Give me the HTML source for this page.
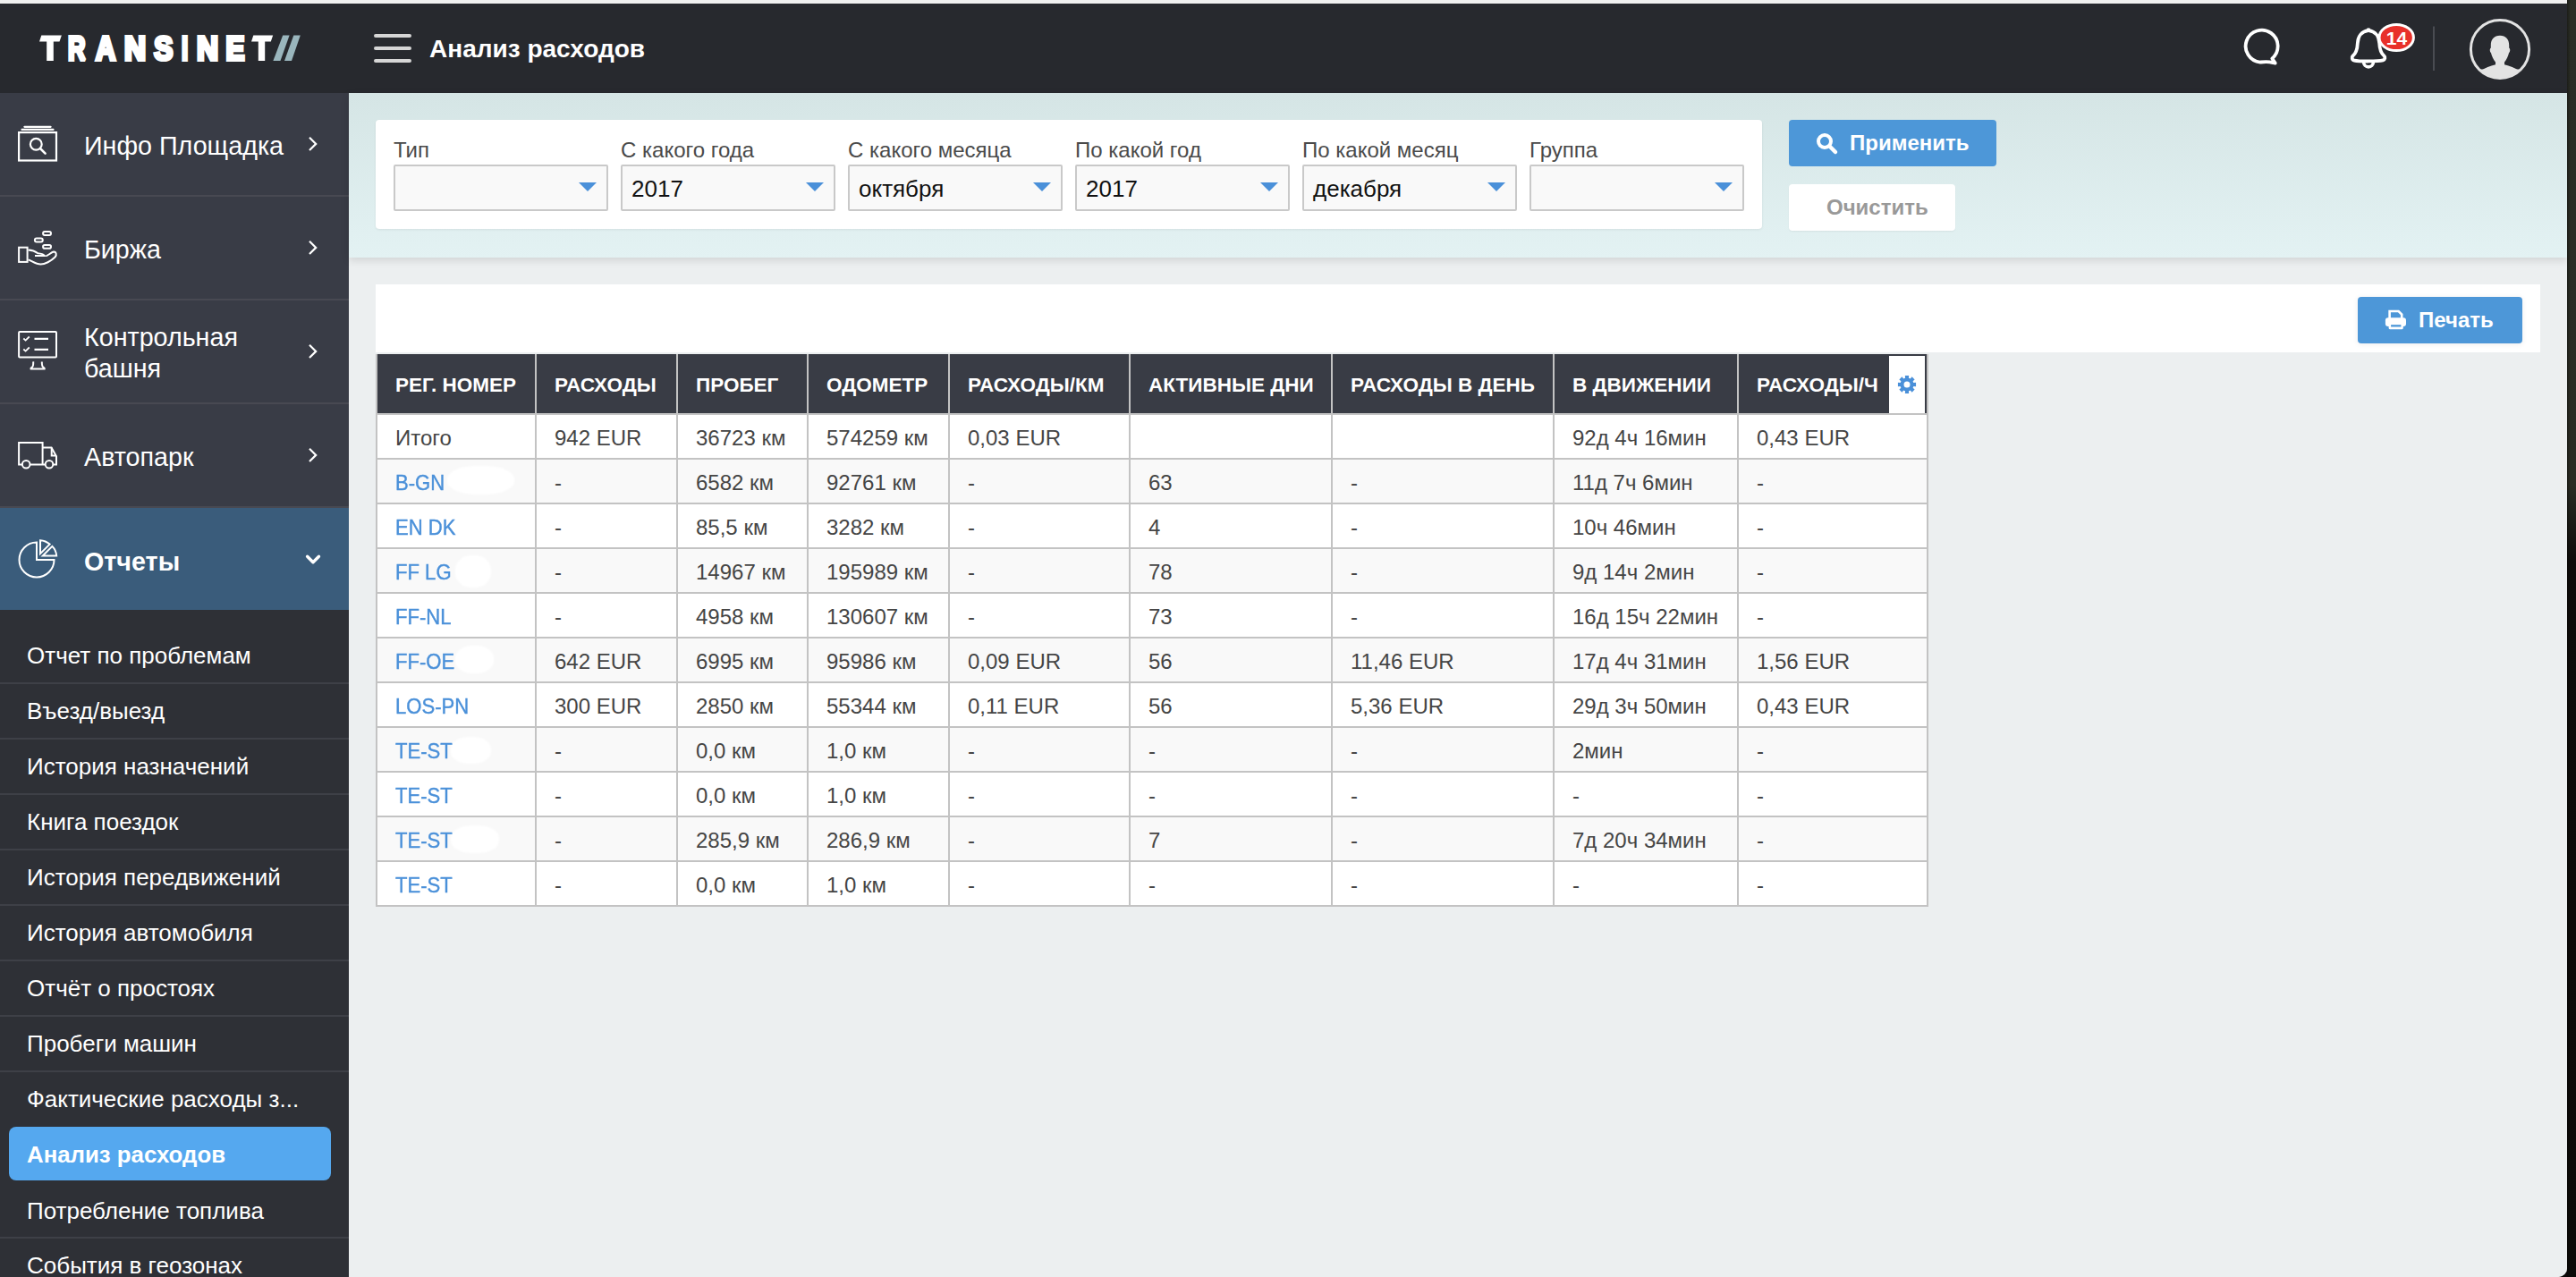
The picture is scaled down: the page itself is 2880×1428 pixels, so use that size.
<!DOCTYPE html>
<html><head><meta charset="utf-8">
<style>
*{box-sizing:border-box;margin:0;padding:0}
html,body{width:2880px;height:1428px;overflow:hidden}
body{position:relative;background:#0c0908;font-family:"Liberation Sans",sans-serif;}
.abs{position:absolute}
#strip{left:2870px;top:0;width:10px;height:1428px;background:linear-gradient(90deg,rgba(0,0,0,0.35),rgba(0,0,0,0) 40%),linear-gradient(#2b2e26,#2a2c24 38%,#0e0c0a 44%,#0c0a08)}
#win{left:0;top:0;width:2870px;height:1428px;overflow:hidden;border-bottom-right-radius:10px;background:#eceff0}
#topbar{left:0;top:0;width:2870px;height:4px;background:#f0f0f0}
#header{left:0;top:4px;width:2870px;height:100px;background:#27292e}
#side{left:0;top:104px;width:390px;height:1324px;background:#2e3036;overflow:hidden}
#main{left:390px;top:104px;width:2480px;height:1324px;background:#eceff0}
#teal{left:0;top:0;width:2480px;height:184px;background:linear-gradient(#d5e5e5,#e3f2f3);box-shadow:0 3px 9px rgba(0,0,0,0.12)}
.card{background:#fff;border-radius:4px}
.lbl{position:absolute;font-size:24px;color:#4a4a4a;white-space:nowrap;line-height:28px}
.sel{position:absolute;width:240px;height:52px;border:2px solid #c9c9c9;background:#f9f9f9;border-radius:2px}
.sel .v{position:absolute;left:10px;top:9.5px;font-size:26px;line-height:30px;color:#111}
.sel .tri{position:absolute;right:11px;top:18px;width:0;height:0;border-left:10px solid transparent;border-right:10px solid transparent;border-top:10px solid #4a90d9}
.mi{position:absolute;left:0;width:390px;background:#393c46}
.mi .t{position:absolute;left:94px;color:#fff;font-size:28.7px;line-height:35px;margin-top:0.5px;white-space:nowrap}
.mi svg{position:absolute;left:0;top:0}
.mi svg.chev{left:340px}
.sub{position:absolute;left:0;width:390px;height:62px;border-top:2px solid #3e4047}
.sub .t{position:absolute;left:30px;top:15px;color:#fff;font-size:26px;line-height:30px;white-space:nowrap}
.btn .bt{font-size:24px;line-height:30px;font-weight:bold;color:#fff;white-space:nowrap}
.th{font-size:22.5px;line-height:66px;padding-top:2px;font-weight:bold;color:#fff;white-space:nowrap}
.td{font-size:24px;line-height:48px;padding-top:2px;color:#454545;white-space:nowrap}
.td.link{color:#4a90d9;transform:scaleX(0.92);transform-origin:0 0;-webkit-text-stroke:0.4px #4a90d9}
</style></head>
<body>
<div id="strip" class="abs"></div>
<div id="win" class="abs">
  <div id="topbar" class="abs"></div>
  <div id="header" class="abs">
    <!-- logo -->
    <svg class="abs" style="left:0;top:0" width="360" height="100" viewBox="0 4 360 100">
      <g fill="#fff" stroke="#fff" stroke-width="4" stroke-miterlimit="2" font-family="Liberation Sans" font-weight="bold" font-size="36.6">
        <path stroke="none" d="M283.3 39.4H305.2L302.8 46.6H296.2V68H288.8V46.6H281Z"/>
        <path stroke="none" d="M46.3 39.4H68.9L66.5 46.6H59.8V68H52.2V46.6H44Z"/>
        <text x="76.00" y="67.2" textLength="19.49" lengthAdjust="spacingAndGlyphs">R</text>
        <text x="107.00" y="67.2" textLength="22.18" lengthAdjust="spacingAndGlyphs">A</text>
        <text x="138.90" y="67.2" textLength="24.05" lengthAdjust="spacingAndGlyphs">N</text>
        <text x="172.30" y="67.2" textLength="21.07" lengthAdjust="spacingAndGlyphs">S</text>
        <text x="203.00" y="67.2" textLength="7.22" lengthAdjust="spacingAndGlyphs">I</text>
        <text x="220.00" y="67.2" textLength="24.08" lengthAdjust="spacingAndGlyphs">N</text>
        <text x="252.40" y="67.2" textLength="20.94" lengthAdjust="spacingAndGlyphs">E</text>
      </g>
      <g fill="#9ab6bd">
        <path d="M305.4 68H313.5L323.6 39.4H316.2Z"/>
        <path d="M318 68H326L335.8 39.4H328.3Z"/>
      </g>
    </svg>
    <!-- hamburger -->
    <div class="abs" style="left:418px;top:34px;width:42px;height:4px;border-radius:2px;background:#d6d6d6"></div>
    <div class="abs" style="left:418px;top:48px;width:42px;height:4px;border-radius:2px;background:#d6d6d6"></div>
    <div class="abs" style="left:418px;top:62px;width:42px;height:4px;border-radius:2px;background:#d6d6d6"></div>
    
    <svg class="abs" style="left:2490px;top:10px" width="360" height="90" viewBox="2490 14 360 90">
      <path transform="translate(-2.5,-0.8)" d="M2542.8 66.2A18 18 0 1 0 2529.5 70.4C2532.5 70 2536 69.4 2540 70.2L2546.2 71.4L2543.2 66.8Z" fill="none" stroke="#fff" stroke-width="3.8" stroke-linejoin="round"/>
      <path d="M2647.8 34.2C2640 35 2636.2 41 2635.8 48.5C2635.5 56 2634.2 59.5 2630.5 62.5C2629 63.8 2629.5 67.2 2632 67.6C2638 68.8 2658 68.8 2664.2 67.4C2666.6 66.9 2667 63.8 2665.4 62.4C2661.8 59.3 2660.5 56 2660.2 48.5C2659.8 41 2656 35 2648.2 34.2Z" fill="none" stroke="#fff" stroke-width="3.8" stroke-linejoin="round"/>
      <circle cx="2648" cy="33.6" r="2.4" fill="#fff"/>
      <path d="M2642.6 69.5A5.4 5.4 0 0 0 2653.4 69.5" fill="none" stroke="#fff" stroke-width="3.6" transform="translate(0,0)"/>
      <ellipse cx="2679.2" cy="42" rx="19.2" ry="14.6" fill="#e8302a" stroke="#fff" stroke-width="3"/>
      <text x="2679.4" y="50" text-anchor="middle" font-family="Liberation Sans" font-weight="bold" font-size="21" fill="#fff">14</text>
      <rect x="2720" y="29.5" width="2" height="49.5" fill="#4a4c52"/>
      <defs><clipPath id="avc"><circle cx="2795" cy="55" r="32"/></clipPath></defs>
      <circle cx="2795" cy="55" r="32.6" fill="none" stroke="#e3e3e3" stroke-width="3"/>
      <g clip-path="url(#avc)" fill="#e3e3e3">
        <path d="M2795 39.8C2788.5 39.8 2784.8 44 2784.8 50.5V53.5C2783.4 54.2 2783.4 58 2785 59.2C2786 63.5 2788 67 2790 69.5V72.2C2784 73.5 2778 76 2774.5 78.6A40 40 0 0 0 2815.5 78.6C2812 76 2806 73.5 2800 72.2V69.5C2802 67 2804 63.5 2805 59.2C2806.6 58 2806.6 54.2 2805.2 53.5V50.5C2805.2 44 2801.5 39.8 2795 39.8Z"/>
        <rect x="2770" y="77.5" width="50" height="20"/>
      </g>
    </svg>
    <div class="abs" style="left:480px;top:34px;font-size:28px;line-height:34px;font-weight:bold;color:#fff;white-space:nowrap">Анализ расходов</div>
  </div>
  <div id="side" class="abs">
    <div class="abs" style="left:0;top:0;width:390px;height:462px;background:#484952"></div>
    <div class="mi" style="top:0;height:114px">
      <svg width="80" height="114" viewBox="0 104 80 114" fill="none" stroke="#fff" stroke-width="2.2">
        <rect x="21.1" y="148.1" width="41.9" height="31.4"/>
        <path d="M24.5 144.9H59.5M27.4 141.8H56.6" stroke-linecap="round"/>
        <circle cx="40.3" cy="161.2" r="6.4"/>
        <path d="M45.2 166.3L50.6 171.6" stroke-width="2.6" stroke-linecap="round"/>
      </svg>
      <div class="t" style="top:41px">Инфо Площадка</div>
      <svg class="chev" width="20" height="30" style="left:340px;top:46px" viewBox="340 150 20 30" fill="none" stroke="#fff" stroke-width="2.2"><path d="M346 153.8L353.2 160.9L346 168"/></svg>
    </div>
    <div class="mi" style="top:116px;height:114px">
      <svg width="80" height="114" viewBox="0 220 80 114" fill="none" stroke="#fff" stroke-width="2">
        <rect x="21.1" y="276.7" width="9.5" height="16.2"/>
        <rect x="48.1" y="259.1" width="8.9" height="3.8" rx="1.9"/>
        <rect x="38.9" y="266.5" width="8.9" height="4.1" rx="2"/>
        <rect x="48.1" y="274" width="8.9" height="3.7" rx="1.8"/>
        <path d="M31.6 279.6C37 279.8 39.5 281.2 42.4 283.2C45 283.6 48 283.5 50 286H39"/>
        <path d="M31.6 290.4C36 292 40 295.5 45.5 295.6C50 295.6 57 292 61.5 287.5C64 284.5 62.5 281.5 60 281.6C58 282 55 284.5 51.5 286.5"/>
      </svg>
      <div class="t" style="top:41px">Биржа</div>
      <svg class="chev" width="20" height="30" style="left:340px;top:46px" viewBox="340 150 20 30" fill="none" stroke="#fff" stroke-width="2.2"><path d="M346 153.8L353.2 160.9L346 168"/></svg>
    </div>
    <div class="mi" style="top:232px;height:114px">
      <svg width="80" height="114" viewBox="0 336 80 114" fill="none" stroke="#fff" stroke-width="2">
        <rect x="21.1" y="371" width="41.9" height="28.6" rx="1"/>
        <path d="M26.3 378.5L28.6 380.6L32.8 376.5M26.3 390.5L28.6 392.6L32.8 388.5" stroke-width="1.8"/>
        <path d="M38.5 378.9H54M38.5 390.9H54" stroke-width="2.2"/>
        <path d="M37.2 404.4C37.3 407 37.2 409.5 36 410.5C35 411.3 34 411.8 34.5 412.6H49.8C50.3 411.8 49 411.3 48.2 410.5C47 409.5 46.8 407 46.8 404.4"/>
      </svg>
      <div class="t" style="top:23px">Контрольная<br>башня</div>
      <svg class="chev" width="20" height="30" style="left:340px;top:46px" viewBox="340 150 20 30" fill="none" stroke="#fff" stroke-width="2.2"><path d="M346 153.8L353.2 160.9L346 168"/></svg>
    </div>
    <div class="mi" style="top:348px;height:114px">
      <svg width="80" height="114" viewBox="0 452 80 114" fill="none" stroke="#fff" stroke-width="2">
        <path d="M24.8 519.5H21.1V494.9H47.6V519.5H33.8M47.6 500.5H57.5L63 510.2V519.5H59.8M50 519.5H47.6"/>
        <path d="M57.7 500.5V509.6H62.5"/>
        <circle cx="29.2" cy="519.2" r="4.3"/>
        <circle cx="55" cy="519.2" r="4.3"/>
      </svg>
      <div class="t" style="top:41px">Автопарк</div>
      <svg class="chev" width="20" height="30" style="left:340px;top:46px" viewBox="340 150 20 30" fill="none" stroke="#fff" stroke-width="2.2"><path d="M346 153.8L353.2 160.9L346 168"/></svg>
    </div>
    <div class="mi" style="top:462px;height:116px;background:#3a5c7b;border-top:2px solid #484952">
      <svg width="80" height="116" style="top:-2px" viewBox="0 566 80 116" fill="none" stroke="#fff" stroke-width="2">
        <path d="M41 606.5A19.5 19.5 0 1 0 60.5 626H41Z"/>
        <path d="M45 604.2V619.2L55.6 608.6A17 17 0 0 0 45 604.2Z"/>
        <path d="M47.8 621.6H63.2A16.5 16.5 0 0 0 58.4 610.9Z"/>
      </svg>
      <div class="t" style="top:42px;font-weight:bold">Отчеты</div>
      <svg width="20" height="20" style="position:absolute;left:340px;top:48.5px" viewBox="340 616 20 20" fill="none" stroke="#fff" stroke-width="3.4" stroke-linecap="round" stroke-linejoin="round"><path d="M343.6 621.3L350 627.8L356.5 621.3"/></svg>
    </div>
    <div class="abs" style="left:0;top:578px;width:390px;height:746px;background:#2e3036">
      <div class="sub" style="top:-2px;height:83px;border-top:none"><div class="t" style="top:38px">Отчет по проблемам</div></div>
      <div class="sub" style="top:81px"><div class="t">Въезд/выезд</div></div>
      <div class="sub" style="top:143px"><div class="t">История назначений</div></div>
      <div class="sub" style="top:205px"><div class="t">Книга поездок</div></div>
      <div class="sub" style="top:267px"><div class="t">История передвижений</div></div>
      <div class="sub" style="top:329px"><div class="t">История автомобиля</div></div>
      <div class="sub" style="top:391px"><div class="t">Отчёт о простоях</div></div>
      <div class="sub" style="top:453px"><div class="t">Пробеги машин</div></div>
      <div class="sub" style="top:515px"><div class="t">Фактические расходы з...</div></div>
      
      <div class="abs" style="left:10px;top:578px;width:360px;height:60px;border-radius:8px;background:#55a8ef"><div style="position:absolute;left:20px;top:16px;color:#fff;font-size:25px;line-height:30px;font-weight:bold;white-space:nowrap;font-size:25.8px">Анализ расходов</div></div>
      <div class="sub" style="top:639px;border-top:none"><div class="t" style="top:18px">Потребление топлива</div></div>
      <div class="sub" style="top:701px"><div class="t">События в геозонах</div></div>
    </div>
  </div>
  <div id="main" class="abs">
<div id="teal" class="abs"></div>
<div class="abs card" style="left:30px;top:30px;width:1550px;height:122px;box-shadow:0 1px 3px rgba(0,0,0,0.07)">
<div class="lbl" style="left:20px;top:20px">Тип</div>
<div class="sel" style="left:20px;top:50px"><div class="tri"></div></div>
<div class="lbl" style="left:274px;top:20px">С какого года</div>
<div class="sel" style="left:274px;top:50px"><div class="v">2017</div><div class="tri"></div></div>
<div class="lbl" style="left:528px;top:20px">С какого месяца</div>
<div class="sel" style="left:528px;top:50px"><div class="v">октября</div><div class="tri"></div></div>
<div class="lbl" style="left:782px;top:20px">По какой год</div>
<div class="sel" style="left:782px;top:50px"><div class="v">2017</div><div class="tri"></div></div>
<div class="lbl" style="left:1036px;top:20px">По какой месяц</div>
<div class="sel" style="left:1036px;top:50px"><div class="v">декабря</div><div class="tri"></div></div>
<div class="lbl" style="left:1290px;top:20px">Группа</div>
<div class="sel" style="left:1290px;top:50px"><div class="tri"></div></div>
</div>
<div class="abs btn" style="left:1610px;top:30px;width:232px;height:52px;background:#4d97d8;border-radius:4px">
<svg class="abs" style="left:30px;top:14px" width="26" height="26" viewBox="0 0 26 26" fill="none" stroke="#fff"><circle cx="10" cy="10" r="7" stroke-width="4"/><path d="M15.5 15.5L22 22" stroke-width="4.5" stroke-linecap="round"/></svg>
<div class="abs bt" style="left:68px;top:11px">Применить</div></div>
<div class="abs btn" style="left:1610px;top:102px;width:186px;height:52px;background:#fff;border-radius:4px;box-shadow:0 1px 2px rgba(0,0,0,0.06)">
<div class="abs bt" style="left:42px;top:10.5px;color:#999">Очистить</div></div>
<div class="abs" style="left:30px;top:214px;width:2420px;height:76px;background:#fff"></div>
<div class="abs btn" style="left:2246px;top:228px;width:184px;height:52px;background:#4d97d8;border-radius:4px;box-shadow:0 1px 6px rgba(0,0,0,0.08)">
<svg class="abs" style="left:30px;top:14px" width="26" height="26" viewBox="0 0 26 26"><path d="M5.6 11V2H15.6L19.2 5.6V11" fill="none" stroke="#fff" stroke-width="2.6"/><rect x="0.9" y="9.2" width="23.1" height="9.8" rx="3" fill="#fff"/><rect x="4.6" y="15.5" width="16.2" height="6.8" rx="1.6" fill="#fff"/><rect x="7.1" y="17.2" width="11.3" height="2.3" fill="#4d97d8"/></svg>
<div class="abs bt" style="left:68px;top:11px">Печать</div></div>
<div class="abs" style="left:30px;top:292px;width:1736px;height:618px;background:#fff"></div>
<div class="abs" style="left:30px;top:292px;width:1736px;height:66px;background:#393c45"></div>
<div class="abs" style="left:30px;top:410px;width:1736px;height:48px;background:#f9f9f9"></div>
<div class="abs" style="left:30px;top:510px;width:1736px;height:48px;background:#f9f9f9"></div>
<div class="abs" style="left:30px;top:610px;width:1736px;height:48px;background:#f9f9f9"></div>
<div class="abs" style="left:30px;top:710px;width:1736px;height:48px;background:#f9f9f9"></div>
<div class="abs" style="left:30px;top:810px;width:1736px;height:48px;background:#f9f9f9"></div>
<div class="abs" style="left:1722px;top:294px;width:40px;height:64px;background:#fff"></div>
<div class="abs" style="left:30px;top:292px;width:2px;height:618px;background:#c3c3c3"></div>
<div class="abs" style="left:208px;top:292px;width:2px;height:618px;background:#c3c3c3"></div>
<div class="abs" style="left:366px;top:292px;width:2px;height:618px;background:#c3c3c3"></div>
<div class="abs" style="left:512px;top:292px;width:2px;height:618px;background:#c3c3c3"></div>
<div class="abs" style="left:670px;top:292px;width:2px;height:618px;background:#c3c3c3"></div>
<div class="abs" style="left:872px;top:292px;width:2px;height:618px;background:#c3c3c3"></div>
<div class="abs" style="left:1098px;top:292px;width:2px;height:618px;background:#c3c3c3"></div>
<div class="abs" style="left:1346px;top:292px;width:2px;height:618px;background:#c3c3c3"></div>
<div class="abs" style="left:1552px;top:292px;width:2px;height:618px;background:#c3c3c3"></div>
<div class="abs" style="left:1764px;top:292px;width:2px;height:618px;background:#c3c3c3"></div>
<div class="abs" style="left:30px;top:358px;width:1736px;height:2px;background:#c3c3c3"></div>
<div class="abs" style="left:30px;top:408px;width:1736px;height:2px;background:#c3c3c3"></div>
<div class="abs" style="left:30px;top:458px;width:1736px;height:2px;background:#c3c3c3"></div>
<div class="abs" style="left:30px;top:508px;width:1736px;height:2px;background:#c3c3c3"></div>
<div class="abs" style="left:30px;top:558px;width:1736px;height:2px;background:#c3c3c3"></div>
<div class="abs" style="left:30px;top:608px;width:1736px;height:2px;background:#c3c3c3"></div>
<div class="abs" style="left:30px;top:658px;width:1736px;height:2px;background:#c3c3c3"></div>
<div class="abs" style="left:30px;top:708px;width:1736px;height:2px;background:#c3c3c3"></div>
<div class="abs" style="left:30px;top:758px;width:1736px;height:2px;background:#c3c3c3"></div>
<div class="abs" style="left:30px;top:808px;width:1736px;height:2px;background:#c3c3c3"></div>
<div class="abs" style="left:30px;top:858px;width:1736px;height:2px;background:#c3c3c3"></div>
<div class="abs" style="left:30px;top:908px;width:1736px;height:2px;background:#c3c3c3"></div>
<div class="abs" style="left:110px;top:417px;width:75px;height:32px;border-radius:45%;background:#fff;filter:blur(1px)"></div>
<div class="abs" style="left:119px;top:517px;width:40px;height:36px;border-radius:45%;background:#fff;filter:blur(1px)"></div>
<div class="abs" style="left:119px;top:618px;width:43px;height:31px;border-radius:45%;background:#fff;filter:blur(1px)"></div>
<div class="abs" style="left:114px;top:720px;width:45px;height:30px;border-radius:45%;background:#fff;filter:blur(1px)"></div>
<div class="abs" style="left:114px;top:819px;width:54px;height:31px;border-radius:45%;background:#fff;filter:blur(1px)"></div>
<div class="abs" style="left:1762px;top:292px;width:2px;height:66px;background:#393c45"></div>
<div class="abs th" style="left:52px;top:292px">РЕГ. НОМЕР</div>
<div class="abs th" style="left:230px;top:292px">РАСХОДЫ</div>
<div class="abs th" style="left:388px;top:292px">ПРОБЕГ</div>
<div class="abs th" style="left:534px;top:292px">ОДОМЕТР</div>
<div class="abs th" style="left:692px;top:292px">РАСХОДЫ/КМ</div>
<div class="abs th" style="left:894px;top:292px">АКТИВНЫЕ ДНИ</div>
<div class="abs th" style="left:1120px;top:292px">РАСХОДЫ В ДЕНЬ</div>
<div class="abs th" style="left:1368px;top:292px">В ДВИЖЕНИИ</div>
<div class="abs th" style="left:1574px;top:292px">РАСХОДЫ/Ч</div>
<svg class="abs" style="left:1731px;top:315px" width="22" height="22" viewBox="0 0 22 22"><path fill="#4a90d9" fill-rule="evenodd" d="M9.03 3.66L8.86 0.93L13.14 0.93L12.97 3.66A7.6 7.6 0 0 1 14.80 4.42L16.61 2.36L19.64 5.39L17.58 7.20A7.6 7.6 0 0 1 18.34 9.03L21.07 8.86L21.07 13.14L18.34 12.97A7.6 7.6 0 0 1 17.58 14.80L19.64 16.61L16.61 19.64L14.80 17.58A7.6 7.6 0 0 1 12.97 18.34L13.14 21.07L8.86 21.07L9.03 18.34A7.6 7.6 0 0 1 7.20 17.58L5.39 19.64L2.36 16.61L4.42 14.80A7.6 7.6 0 0 1 3.66 12.97L0.93 13.14L0.93 8.86L3.66 9.03A7.6 7.6 0 0 1 4.42 7.20L2.36 5.39L5.39 2.36L7.20 4.42A7.6 7.6 0 0 1 9.03 3.66ZM11 7.5A3.5 3.5 0 1 0 11 14.5A3.5 3.5 0 1 0 11 7.5Z"/></svg>
<div class="abs td" style="left:52px;top:360px">Итого</div>
<div class="abs td" style="left:230px;top:360px">942 EUR</div>
<div class="abs td" style="left:388px;top:360px">36723 км</div>
<div class="abs td" style="left:534px;top:360px">574259 км</div>
<div class="abs td" style="left:692px;top:360px">0,03 EUR</div>
<div class="abs td" style="left:1368px;top:360px">92д 4ч 16мин</div>
<div class="abs td" style="left:1574px;top:360px">0,43 EUR</div>
<div class="abs td link" style="left:52px;top:410px">B-GN</div>
<div class="abs td" style="left:230px;top:410px">-</div>
<div class="abs td" style="left:388px;top:410px">6582 км</div>
<div class="abs td" style="left:534px;top:410px">92761 км</div>
<div class="abs td" style="left:692px;top:410px">-</div>
<div class="abs td" style="left:894px;top:410px">63</div>
<div class="abs td" style="left:1120px;top:410px">-</div>
<div class="abs td" style="left:1368px;top:410px">11д 7ч 6мин</div>
<div class="abs td" style="left:1574px;top:410px">-</div>
<div class="abs td link" style="left:52px;top:460px">EN DK</div>
<div class="abs td" style="left:230px;top:460px">-</div>
<div class="abs td" style="left:388px;top:460px">85,5 км</div>
<div class="abs td" style="left:534px;top:460px">3282 км</div>
<div class="abs td" style="left:692px;top:460px">-</div>
<div class="abs td" style="left:894px;top:460px">4</div>
<div class="abs td" style="left:1120px;top:460px">-</div>
<div class="abs td" style="left:1368px;top:460px">10ч 46мин</div>
<div class="abs td" style="left:1574px;top:460px">-</div>
<div class="abs td link" style="left:52px;top:510px">FF LG</div>
<div class="abs td" style="left:230px;top:510px">-</div>
<div class="abs td" style="left:388px;top:510px">14967 км</div>
<div class="abs td" style="left:534px;top:510px">195989 км</div>
<div class="abs td" style="left:692px;top:510px">-</div>
<div class="abs td" style="left:894px;top:510px">78</div>
<div class="abs td" style="left:1120px;top:510px">-</div>
<div class="abs td" style="left:1368px;top:510px">9д 14ч 2мин</div>
<div class="abs td" style="left:1574px;top:510px">-</div>
<div class="abs td link" style="left:52px;top:560px">FF-NL</div>
<div class="abs td" style="left:230px;top:560px">-</div>
<div class="abs td" style="left:388px;top:560px">4958 км</div>
<div class="abs td" style="left:534px;top:560px">130607 км</div>
<div class="abs td" style="left:692px;top:560px">-</div>
<div class="abs td" style="left:894px;top:560px">73</div>
<div class="abs td" style="left:1120px;top:560px">-</div>
<div class="abs td" style="left:1368px;top:560px">16д 15ч 22мин</div>
<div class="abs td" style="left:1574px;top:560px">-</div>
<div class="abs td link" style="left:52px;top:610px">FF-OE</div>
<div class="abs td" style="left:230px;top:610px">642 EUR</div>
<div class="abs td" style="left:388px;top:610px">6995 км</div>
<div class="abs td" style="left:534px;top:610px">95986 км</div>
<div class="abs td" style="left:692px;top:610px">0,09 EUR</div>
<div class="abs td" style="left:894px;top:610px">56</div>
<div class="abs td" style="left:1120px;top:610px">11,46 EUR</div>
<div class="abs td" style="left:1368px;top:610px">17д 4ч 31мин</div>
<div class="abs td" style="left:1574px;top:610px">1,56 EUR</div>
<div class="abs td link" style="left:52px;top:660px">LOS-PN</div>
<div class="abs td" style="left:230px;top:660px">300 EUR</div>
<div class="abs td" style="left:388px;top:660px">2850 км</div>
<div class="abs td" style="left:534px;top:660px">55344 км</div>
<div class="abs td" style="left:692px;top:660px">0,11 EUR</div>
<div class="abs td" style="left:894px;top:660px">56</div>
<div class="abs td" style="left:1120px;top:660px">5,36 EUR</div>
<div class="abs td" style="left:1368px;top:660px">29д 3ч 50мин</div>
<div class="abs td" style="left:1574px;top:660px">0,43 EUR</div>
<div class="abs td link" style="left:52px;top:710px">TE-ST</div>
<div class="abs td" style="left:230px;top:710px">-</div>
<div class="abs td" style="left:388px;top:710px">0,0 км</div>
<div class="abs td" style="left:534px;top:710px">1,0 км</div>
<div class="abs td" style="left:692px;top:710px">-</div>
<div class="abs td" style="left:894px;top:710px">-</div>
<div class="abs td" style="left:1120px;top:710px">-</div>
<div class="abs td" style="left:1368px;top:710px">2мин</div>
<div class="abs td" style="left:1574px;top:710px">-</div>
<div class="abs td link" style="left:52px;top:760px">TE-ST</div>
<div class="abs td" style="left:230px;top:760px">-</div>
<div class="abs td" style="left:388px;top:760px">0,0 км</div>
<div class="abs td" style="left:534px;top:760px">1,0 км</div>
<div class="abs td" style="left:692px;top:760px">-</div>
<div class="abs td" style="left:894px;top:760px">-</div>
<div class="abs td" style="left:1120px;top:760px">-</div>
<div class="abs td" style="left:1368px;top:760px">-</div>
<div class="abs td" style="left:1574px;top:760px">-</div>
<div class="abs td link" style="left:52px;top:810px">TE-ST</div>
<div class="abs td" style="left:230px;top:810px">-</div>
<div class="abs td" style="left:388px;top:810px">285,9 км</div>
<div class="abs td" style="left:534px;top:810px">286,9 км</div>
<div class="abs td" style="left:692px;top:810px">-</div>
<div class="abs td" style="left:894px;top:810px">7</div>
<div class="abs td" style="left:1120px;top:810px">-</div>
<div class="abs td" style="left:1368px;top:810px">7д 20ч 34мин</div>
<div class="abs td" style="left:1574px;top:810px">-</div>
<div class="abs td link" style="left:52px;top:860px">TE-ST</div>
<div class="abs td" style="left:230px;top:860px">-</div>
<div class="abs td" style="left:388px;top:860px">0,0 км</div>
<div class="abs td" style="left:534px;top:860px">1,0 км</div>
<div class="abs td" style="left:692px;top:860px">-</div>
<div class="abs td" style="left:894px;top:860px">-</div>
<div class="abs td" style="left:1120px;top:860px">-</div>
<div class="abs td" style="left:1368px;top:860px">-</div>
<div class="abs td" style="left:1574px;top:860px">-</div>
</div>
</div>
</div>
</body></html>
